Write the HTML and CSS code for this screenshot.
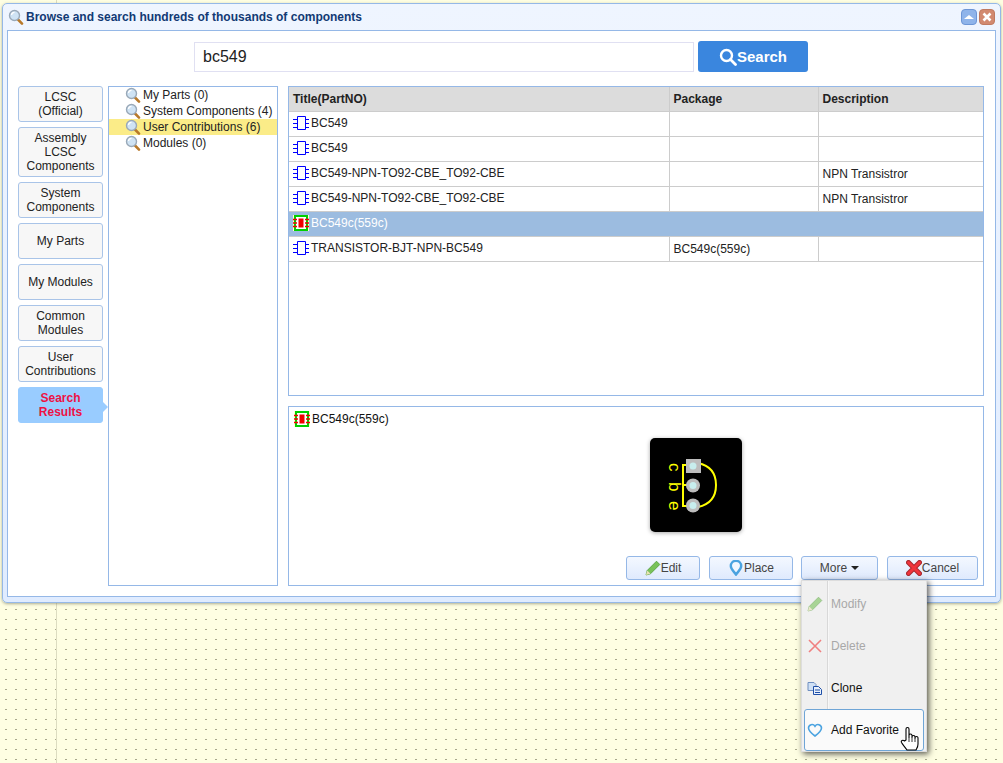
FILE: index.html
```html
<!DOCTYPE html>
<html>
<head>
	<meta charset="utf-8">
	<title>Browse components</title>
	<link rel="stylesheet" href="styles.css">
</head>
<body>
	<svg class="defs" width="0" height="0">
		<defs>
			<symbol id="i-lens" viewBox="0 0 16 16">
				<path d="M9.5 10l4.5 4.6" stroke="#b8792a" stroke-width="2.6" stroke-linecap="round"/>
				<circle cx="6.5" cy="6.5" r="5" fill="#cfe3f4" stroke="#9aa9b8" stroke-width="1.4"/>
				<path d="M3.5 6a3 3 0 0 1 3-2.6" fill="none" stroke="#fff" stroke-width="1.3"/>
			</symbol>
			<symbol id="i-part" viewBox="0 0 16 16">
				<path d="M4.500 1.500h8v13h-8zM0 4.500h4.500M0 8.500h4.500M0 12.500h4.500M12.500 4.500h3.500M12.500 8.500h3.500M12.500 12.500h3.500" fill="none" stroke="#0000ff" stroke-width="1"/>
			</symbol>
			<symbol id="i-chip" viewBox="0 0 16 16">
				<rect x="0" y="0" width="16" height="16" fill="#ffffc8"/>
				<rect x="2" y="1" width="12" height="14" fill="#fff" stroke="#00d000" stroke-width="2"/>
				<rect x="5.500" y="3.500" width="5" height="9" fill="#f00000"/>
				<path d="M0 4.500h4M0 8h4M0 11.500h4M12 4.500h4M12 8h4M12 11.500h4" stroke="#f00000" stroke-width="1.500"/>
			</symbol>
			<symbol id="i-pencil" viewBox="0 0 16 16">
				<path d="M1 15l1.200-4.500L11.500 1.200l3.300 3.300-9.300 9.300z" fill="#79c25a" stroke="#4d9a35" stroke-width="0.800"/>
				<path d="M1 15l1.200-4.500 3.300 3.300z" fill="#e9e2b4"/>
			</symbol>
		</defs>
	</svg>

	<div class="guide"></div>

	<div class="window">
		<div class="window-title">
			<svg class="icon"><use href="#i-lens"/></svg>
			<span class="window-name">Browse and search hundreds of thousands of components</span>
			<span class="tool tool-up"></span>
			<span class="tool tool-close">
				<svg width="12" height="12" viewBox="0 0 12 12"><path d="M2.500 2.500l7 7M9.500 2.500l-7 7" stroke="#fff" stroke-width="2.600"/></svg>
			</span>
		</div>
		<div class="window-body">
			<div class="search-row">
				<input class="search-input" type="text" value="bc549">
				<button class="search-btn">
					<svg width="18" height="18" viewBox="0 0 18 18"><circle cx="7.500" cy="7.500" r="5.500" fill="none" stroke="#fff" stroke-width="2.400"/><path d="M11.500 11.500l5 5" stroke="#fff" stroke-width="2.800" stroke-linecap="round"/></svg>Search
				</button>
			</div>
			<div class="browser">
				<div class="tabs">
					<div class="tab">LCSC<br>(Official)</div>
					<div class="tab tab-tall">Assembly<br>LCSC<br>Components</div>
					<div class="tab">System<br>Components</div>
					<div class="tab">My Parts</div>
					<div class="tab">My Modules</div>
					<div class="tab">Common<br>Modules</div>
					<div class="tab">User<br>Contributions</div>
					<div class="tab tab-active">Search<br>Results</div>
				</div>
				<div class="tree">
					<div class="tree-row"><svg class="icon"><use href="#i-lens"/></svg>My Parts (0)</div>
					<div class="tree-row"><svg class="icon"><use href="#i-lens"/></svg>System Components (4)</div>
					<div class="tree-row tree-selected"><svg class="icon"><use href="#i-lens"/></svg>User Contributions (6)</div>
					<div class="tree-row"><svg class="icon"><use href="#i-lens"/></svg>Modules (0)</div>
				</div>
				<div class="results">
					<div class="grid-panel">
						<table class="grid">
							<thead>
								<tr><th class="col-title">Title(PartNO)</th><th class="col-package">Package</th><th>Description</th></tr>
							</thead>
							<tbody>
								<tr><td><span class="part"><svg class="icon"><use href="#i-part"/></svg>BC549</span></td><td></td><td></td></tr>
								<tr><td><span class="part"><svg class="icon"><use href="#i-part"/></svg>BC549</span></td><td></td><td></td></tr>
								<tr><td><span class="part"><svg class="icon"><use href="#i-part"/></svg>BC549-NPN-TO92-CBE_TO92-CBE</span></td><td></td><td>NPN Transistror</td></tr>
								<tr><td><span class="part"><svg class="icon"><use href="#i-part"/></svg>BC549-NPN-TO92-CBE_TO92-CBE</span></td><td></td><td>NPN Transistror</td></tr>
								<tr class="row-selected"><td><span class="part"><svg class="icon"><use href="#i-chip"/></svg>BC549c(559c)</span></td><td></td><td></td></tr>
								<tr><td><span class="part"><svg class="icon"><use href="#i-part"/></svg>TRANSISTOR-BJT-NPN-BC549</span></td><td>BC549c(559c)</td><td></td></tr>
							</tbody>
						</table>
					</div>
					<div class="preview">
						<div class="preview-name"><svg class="icon"><use href="#i-chip"/></svg>BC549c(559c)</div>
						<div class="thumb">
							<svg width="92" height="94" viewBox="0 0 92 94">
								<path d="M48 25C62 28 66 38 66 47S62 66 48 69" fill="none" stroke="#ffff00" stroke-width="2"/>
								<path d="M43 27H33V68H43M33 47H43" fill="none" stroke="#ffff00" stroke-width="2"/>
								<rect x="36" y="21" width="15" height="14" fill="#bdbdbd"/>
								<circle cx="43" cy="47.500" r="7" fill="#bdbdbd"/>
								<circle cx="43" cy="67.500" r="7" fill="#bdbdbd"/>
								<circle cx="43" cy="28" r="3.500" fill="#c8eeee"/>
								<circle cx="43" cy="47.500" r="3.500" fill="#c8eeee"/>
								<circle cx="43" cy="67.500" r="3.500" fill="#c8eeee"/>
								<text class="pin-label" transform="translate(19 25) rotate(90)">c</text>
								<text class="pin-label" transform="translate(19 44) rotate(90)">b</text>
								<text class="pin-label" transform="translate(19 63) rotate(90)">e</text>
							</svg>
						</div>
						<div class="actions">
							<button class="btn btn-edit"><svg class="icon"><use href="#i-pencil"/></svg>Edit</button>
							<button class="btn btn-place">
								<svg class="icon" viewBox="0 0 16 16"><path d="M8 14.500C6 11.500 2.800 9.500 2.800 6a5.200 5.200 0 0 1 10.400 0C13.200 9.500 10 11.500 8 14.500z" fill="#f2f7ff" stroke="#4ba3e0" stroke-width="2.400"/></svg>Place
							</button>
							<button class="btn btn-more">More<span class="caret"></span></button>
							<button class="btn btn-cancel">
								<svg class="icon" viewBox="0 0 16 16"><path d="M2.500 2.500l11 11M13.500 2.500l-11 11" stroke="#a82a30" stroke-width="5" stroke-linecap="round"/><path d="M2.500 2.500l11 11M13.500 2.500l-11 11" stroke="#f0343c" stroke-width="3" stroke-linecap="round"/></svg>Cancel
							</button>
						</div>
					</div>
				</div>
			</div>
		</div>
	</div>

	<div class="menu">
		<div class="menu-item item-off">
			<svg class="icon icon-off"><use href="#i-pencil"/></svg>Modify
		</div>
		<div class="menu-item item-off">
			<svg class="icon" viewBox="0 0 16 16"><path d="M2 2l12 12M14 2L2 14" stroke="#f08080" stroke-width="1.600"/></svg>Delete
		</div>
		<div class="menu-item">
			<svg class="icon" viewBox="0 0 16 16"><path d="M1 2.500h6l2 2v6H1z" fill="#cfe0f5" stroke="#6f8fc0"/><path d="M6.500 6.500h5l3 3v5h-8z" fill="#e8f0fb" stroke="#1f4fa8"/><path d="M8 10h5M8 12.500h5" stroke="#1f4fa8"/></svg>Clone
		</div>
		<div class="menu-item item-hover">
			<svg class="icon" viewBox="0 0 16 16"><path d="M8 14C4 11 1.500 9 1.500 6A3.500 3.500 0 0 1 8 4.300 3.500 3.500 0 0 1 14.500 6C14.500 9 12 11 8 14z" fill="none" stroke="#4ba3e0" stroke-width="1.600"/></svg>Add Favorite
		</div>
	</div>

	<svg class="hand" width="20" height="26" viewBox="0 0 20 26">
		<path d="M6 14V3a1.500 1.500 0 0 1 3 0v8V9.500a1.500 1.500 0 0 1 3 0V11a1.500 1.500 0 0 1 3 0v1a1.400 1.400 0 0 1 3 0v6c0 3-1 4-2 6H7C5 21 3 19 1.500 16.500c-1-2 1.500-3 3-1.500z" fill="#fff" stroke="#000" stroke-width="1.100" stroke-linejoin="round"/>
		<path d="M9 11v5M12 11v5M15 12v4" stroke="#000" stroke-width="0.800"/>
	</svg>
</body>
</html>
```

FILE: styles.css
```css
* {
	box-sizing: border-box;
}

html, body {
	height: 100%;
}

body {
	margin: 0;
	overflow: hidden;
	position: relative;
	font-family: "Liberation Sans", Arial, sans-serif;
	font-size: 12px;
	color: #000;
	background-color: #fefee2;
	background-image: conic-gradient(at 2px 1px, transparent 270deg, #a8a88c 270deg);
	background-size: 10px 10px;
	background-position: 5px 9px;
}

.defs {
	position: absolute;
}

.guide {
	position: absolute;
	left: 56px;
	top: 0;
	bottom: 0;
	width: 1px;
	background: #dcdcc0;
}

.icon {
	width: 16px;
	height: 16px;
	flex: none;
}

/* window */
.window {
	position: absolute;
	left: 2px;
	top: 3px;
	width: 999px;
	height: 600px;
	padding: 0 4px 5px;
	display: flex;
	flex-direction: column;
	background: linear-gradient(#eff5ff, #e0ecff);
	border: 1px solid #95b8e7;
	border-radius: 5px;
	box-shadow: 0 1px 3px rgba(120, 120, 90, 0.6);
}

.window-title {
	height: 26px;
	flex: none;
	display: flex;
	align-items: center;
	gap: 2px;
	padding: 0 1px;
}

.window-name {
	flex: 1;
	font-weight: bold;
	color: #123a74;
}

.tool {
	width: 16px;
	height: 16px;
	display: flex;
	align-items: center;
	justify-content: center;
	border-radius: 4px;
}

.tool-up {
	background: #8fb4ea;
	border: 1px solid #6d96d6;
}

.tool-up:before {
	content: "";
	border-left: 5px solid transparent;
	border-right: 5px solid transparent;
	border-bottom: 4px solid #fff;
}

.tool-close {
	background: #d28a70;
	border: 1px solid #c07a60;
}

.window-body {
	flex: 1;
	min-height: 0;
	background: #fff;
	border: 1px solid #95b8e7;
	padding: 10px;
	display: flex;
	flex-direction: column;
}

/* search */
.search-row {
	height: 45px;
	flex: none;
	display: flex;
	justify-content: center;
	gap: 4px;
	padding-right: 1px;
}

.search-input {
	width: 500px;
	height: 30px;
	margin-top: 1px;
	padding: 0 8px;
	border: 1px solid #e0e0f2;
	font-family: inherit;
	font-size: 16px;
	color: #222;
	outline: none;
}

.search-btn {
	width: 110px;
	height: 31px;
	display: flex;
	align-items: center;
	justify-content: center;
	border: none;
	border-radius: 3px;
	background: #3a86de;
	color: #fff;
	font-family: inherit;
	font-size: 15px;
	font-weight: bold;
}

.browser {
	flex: 1;
	min-height: 0;
	display: flex;
}

/* left tabs */
.tabs {
	width: 85px;
	flex: none;
	display: flex;
	flex-direction: column;
	gap: 5px;
}

.tab {
	height: 36px;
	display: flex;
	align-items: center;
	justify-content: center;
	text-align: center;
	line-height: 14px;
	color: #222;
	background: #f7f7f7;
	border: 1px solid #a9c4e8;
	border-radius: 3px;
}

.tab-tall {
	height: 50px;
}

.tab-active {
	position: relative;
	background: #99ccff;
	border-color: #99ccff;
	color: #ee1144;
	font-weight: bold;
}

.tab-active:after {
	content: "";
	position: absolute;
	right: -6px;
	top: 14px;
	border-left: 5px solid #99ccff;
	border-top: 5px solid transparent;
	border-bottom: 5px solid transparent;
}

/* tree */
.tree {
	width: 170px;
	flex: none;
	margin-left: 5px;
	border: 1px solid #95b8e7;
}

.tree-row {
	height: 16px;
	padding-left: 16px;
	display: flex;
	align-items: center;
	gap: 2px;
	color: #222;
}

.tree-selected {
	background: #fbec88;
}

/* right side */
.results {
	flex: 1;
	min-width: 0;
	margin-left: 10px;
	margin-right: 1px;
	display: flex;
	flex-direction: column;
	gap: 10px;
}

.grid-panel {
	height: 310px;
	flex: none;
	border: 1px solid #95b8e7;
}

.grid {
	width: 100%;
	table-layout: fixed;
	border-collapse: collapse;
}

.grid th {
	height: 24px;
	padding: 0 4px;
	text-align: left;
	font-size: 12px;
	color: #222;
	background: #dcdcdc;
	border-bottom: 1px solid #cccccc;
	border-right: 1px solid #cccccc;
}

.col-title {
	width: 380px;
}

.col-package {
	width: 149px;
}

.grid td {
	height: 25px;
	padding: 0 4px;
	color: #222;
	border-bottom: 1px solid #cccccc;
	border-right: 1px solid #cccccc;
}

.grid tr > :last-child {
	border-right: none;
}

.part {
	display: flex;
	align-items: center;
	gap: 2px;
	margin-top: -2px;
}

.row-selected td {
	background: #9cbce0;
	color: #fff;
	border-right-color: #9cbce0;
}

/* preview */
.preview {
	flex: 1;
	min-height: 0;
	display: flex;
	flex-direction: column;
	border: 1px solid #95b8e7;
	padding: 4px 5px 5px 4px;
}

.preview-name {
	height: 16px;
	display: flex;
	align-items: center;
	gap: 2px;
	padding-left: 1px;
	color: #111;
}

.thumb {
	width: 92px;
	height: 94px;
	margin: 11px 0 0 357px;
	background: #000;
	border-radius: 5px;
	box-shadow: 0 1px 4px rgba(0, 0, 0, 0.35);
}

.pin-label {
	font-family: "Liberation Sans", Arial, sans-serif;
	font-size: 17px;
	fill: #ffff00;
}

.actions {
	margin-top: auto;
	display: flex;
	justify-content: flex-end;
}

.btn {
	height: 24px;
	display: flex;
	align-items: center;
	justify-content: center;
	padding: 0;
	font-family: inherit;
	font-size: 12px;
	color: #444;
	background: linear-gradient(#f4f8ff, #dfeafd);
	border: 1px solid #95b8e7;
	border-radius: 3px;
}

.btn-edit {
	width: 74px;
}

.btn-place {
	width: 84px;
	margin-left: 9px;
}

.btn-more {
	width: 77px;
	margin-left: 8px;
}

.btn-cancel {
	width: 91px;
	margin-left: 9px;
}

.caret {
	margin-left: 4px;
	border-left: 4px solid transparent;
	border-right: 4px solid transparent;
	border-top: 4px solid #222;
}

/* more menu */
.menu {
	position: absolute;
	left: 801px;
	top: 580px;
	width: 126px;
	height: 172px;
	padding: 2px 2px 0;
	display: flex;
	flex-direction: column;
	background: linear-gradient(90deg, #f0f0f0 25px, #d8d8d8 25px, #d8d8d8 26px, #fff 26px, #f0f0f0 27px);
	border: 1px solid #ddd;
	box-shadow: 2px 2px 6px rgba(0, 0, 0, 0.65);
}

.menu-item {
	height: 42px;
	flex: none;
	display: flex;
	align-items: center;
	gap: 8px;
	padding-left: 2px;
	color: #111;
	border: 1px solid transparent;
}

.item-off {
	color: #a8a8a8;
}

.icon-off {
	opacity: 0.6;
}

.item-hover {
	background: #fafafa;
	border-color: #6fa5d6;
	border-radius: 3px;
}

.hand {
	position: absolute;
	left: 900px;
	top: 726px;
}
```
